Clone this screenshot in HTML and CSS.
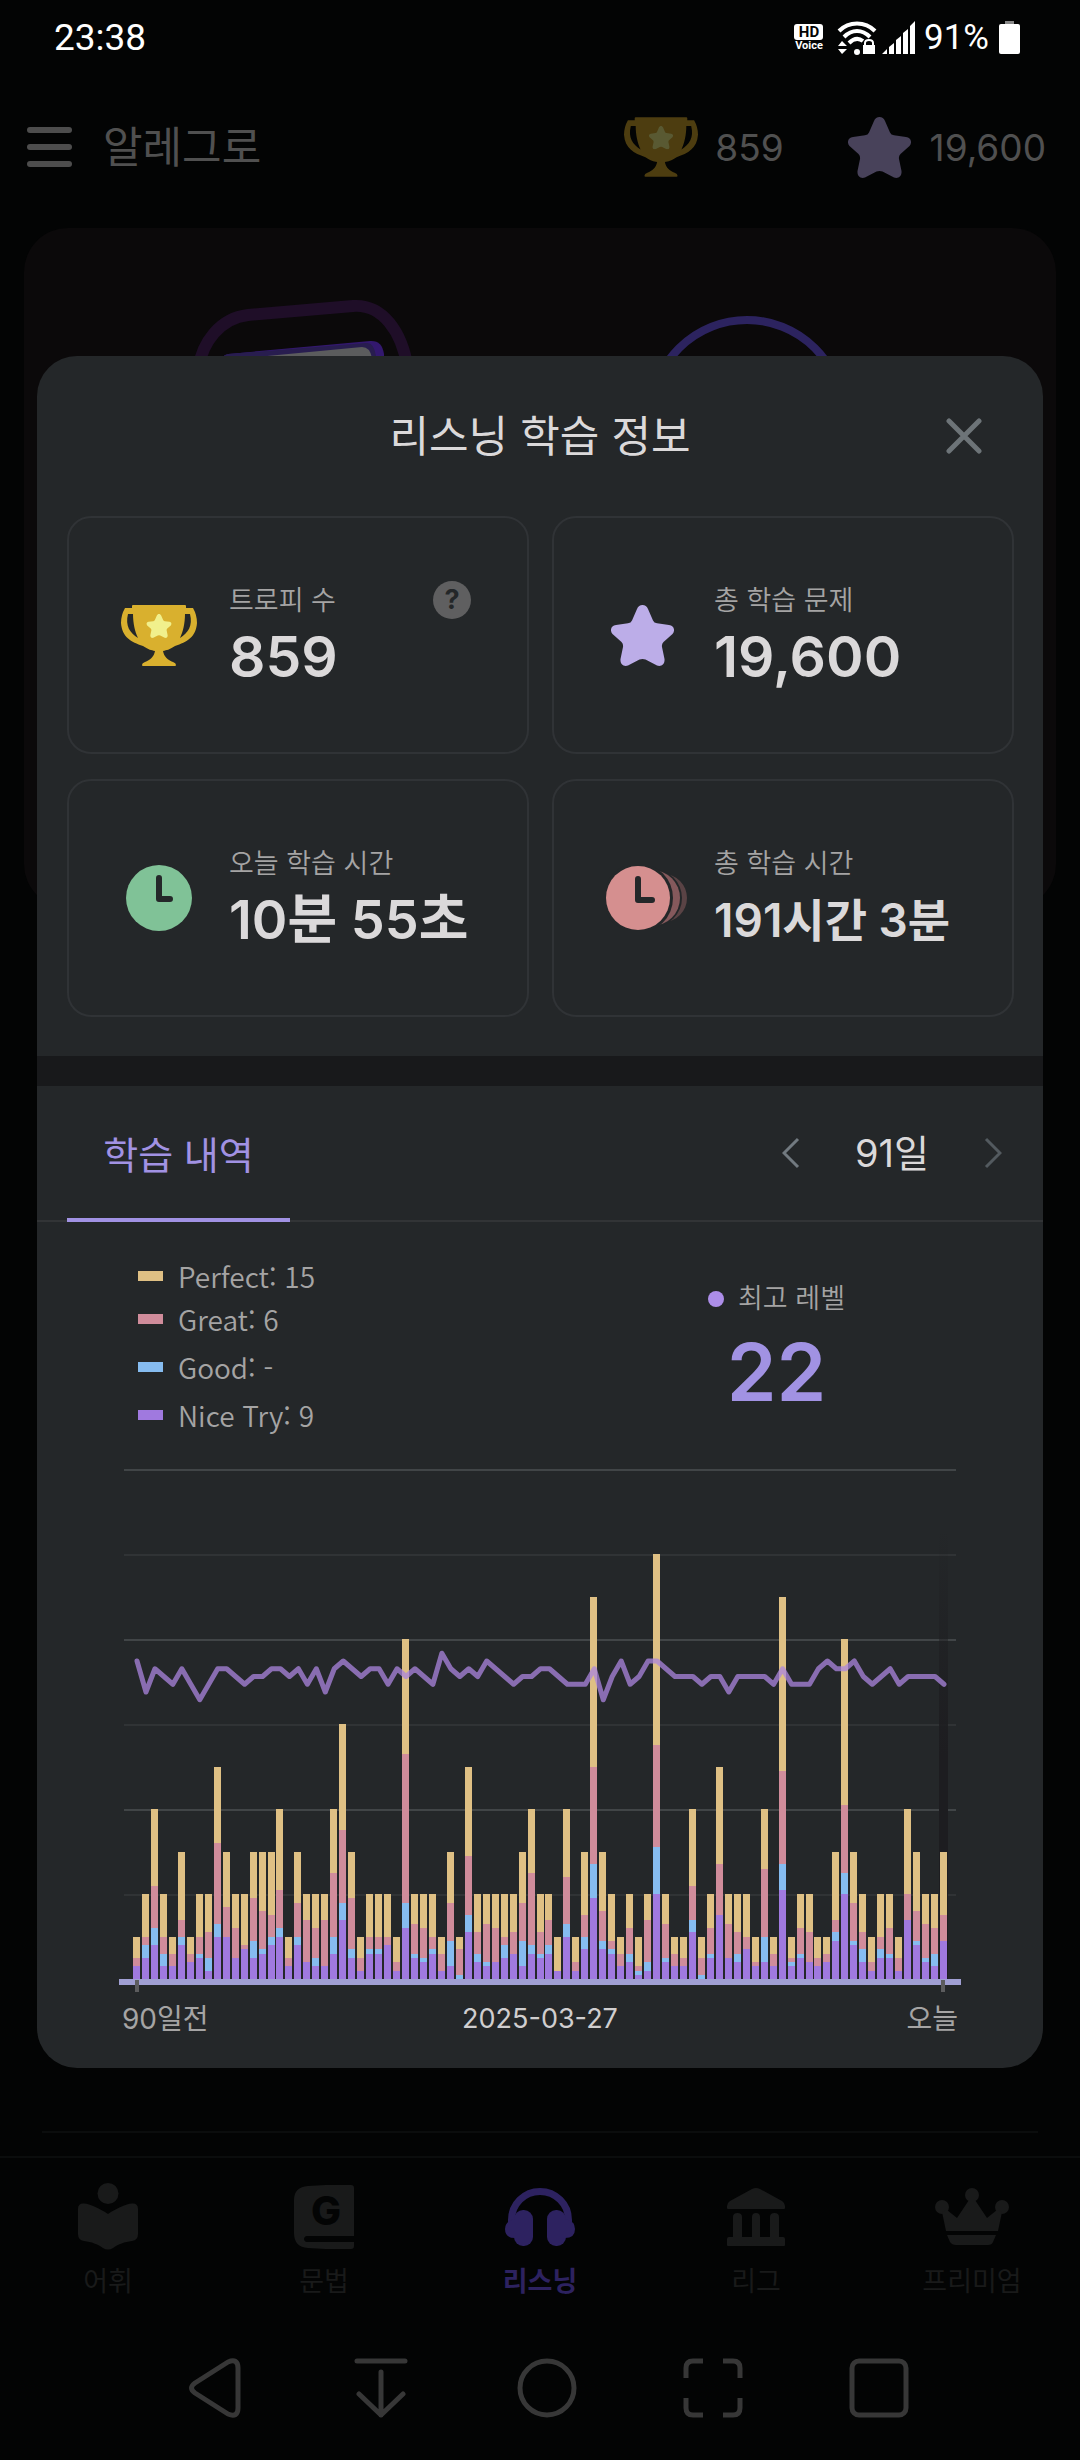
FILE: index.html
```html
<!DOCTYPE html>
<html lang="ko">
<head>
<meta charset="utf-8">
<meta name="viewport" content="width=device-width, initial-scale=1">
<title>리스닝 학습 정보</title>
<link rel="stylesheet" href="styles.css">
</head>
<body>
<svg class="sprite" aria-hidden="true">
  <symbol id="star" viewBox="0 0 63 61">
    <path d="M31.500 0C34 0 36 1.500 37 4L42 15.500Q43 18 46 18.300L58 20C63 20.500 64.500 25.500 61.500 29L52.500 37Q50.500 39 51 42L53.500 54C54 59 50.500 62 46 60.500L34.500 54.500Q31.500 53.300 28.500 54.500L17 60.500C12.500 62 9 59 9.500 54L12 42Q12.500 39 10.500 37L1.500 29C-1.500 25.500 0 20.500 5 20L17 18.300Q20 18 21 15.500L26 4C27 1.500 29 0 31.500 0Z"/>
  </symbol>
  <symbol id="trophy" viewBox="0 0 76 61">
    <path fill-rule="evenodd" d="M11 1Q11 0 12 0H64Q65 0 65 1V3H72Q76 10 76 18C75 32 66 37 54 41C48 45 46 45 42 46C43 52 47 55 52 57Q55 58 55 60Q55 61 54 61H22Q21 61 21 60Q21 58 24 57C29 55 33 52 34 46C30 45 28 45 22 41C10 37 1 32 0 18Q0 10 4 3H11ZM7 9H12C12 18 14 27 17 33C9 28 4 21 7 9ZM69 9H64C64 18 62 27 59 33C67 28 72 21 69 9Z"/>
    <svg class="trophy-star" x="25" y="9" width="26" height="24"><use href="#star"/></svg>
  </symbol>
</svg>

<div class="screen">
  <div class="status">
    <time>23:38</time>
    <div class="status-icons">
      <svg class="hd" viewBox="0 0 30 28" aria-label="HD Voice">
        <rect x="0" y="0" width="29" height="16" rx="3" fill="#fff"/>
        <text x="15" y="13" class="hd-top">HD</text>
        <text x="15" y="25" class="hd-bottom">Voice</text>
      </svg>
      <svg class="wifi" viewBox="0 0 40 34" aria-label="Wi-Fi">
        <g fill="none" stroke="#fff" stroke-width="4">
          <path d="M2 10C12 0 28 0 38 10"/><path d="M7 16C15 8 25 8 33 16"/><path d="M12 22C17 17 22 17 26 20"/>
        </g>
        <path fill="#fff" d="M1 25L5 20L10 25ZM1 28H10L5 33ZM26 24H38V33H26Z"/>
        <circle cx="20" cy="31" r="3" fill="#fff"/>
        <path d="M28 25V22Q28 19 32 19Q36 19 36 22V25" fill="none" stroke="#fff" stroke-width="2"/>
      </svg>
      <svg class="signal" viewBox="0 0 34 34" aria-label="신호"><path fill="#fff" d="M0 33L5 28V33ZM7 33V26L12 22V33ZM14 33V19L19 15V33ZM21 33V12L26 8V33ZM28 33V5L33 0V33Z"/></svg>
      <span>91%</span>
      <svg class="battery" viewBox="0 0 22 34" aria-label="배터리"><rect x="6" width="9" height="3" fill="#888"/><rect y="3" width="21" height="30" rx="2" fill="#fff"/></svg>
    </div>
  </div>

  <header class="top">
    <button class="menu" aria-label="메뉴"><span></span><span></span><span></span></button>
    <h1>알레그로</h1>
    <svg class="top-trophy"><use href="#trophy"/></svg>
    <span class="top-count">859</span>
    <svg class="top-star"><use href="#star"/></svg>
    <span class="top-count">19,600</span>
  </header>

  <div class="stage">
    <main class="behind">
      <div class="hero">
        <svg viewBox="0 0 1032 140" aria-hidden="true">
          <path d="M173 150C176 112 198 90 224 87L329 78C356 76 380 100 385 150" fill="none" stroke="#1f0e28" stroke-width="12"/>
          <path d="M196 134Q198 127 204 126L346 113Q358 112 360 126V140H196Z" fill="#33186e"/>
          <path d="M196 134Q198 127 204 126L342 115Q350 114 352 128V140H196Z" fill="#281d4f"/>
          <path d="M210 131L338 119Q346 119 348 130V140H210Z" fill="#5b5c5d"/>
          <circle cx="723" cy="188" r="96" fill="none" stroke="#2c235f" stroke-width="8"/>
        </svg>
      </div>
      <hr>
    </main>

    <section class="modal" role="dialog" aria-labelledby="modal-title">
      <div class="modal-head">
        <h2 id="modal-title">리스닝 학습 정보</h2>
        <button class="close" aria-label="닫기"><svg viewBox="0 0 36 36"><path d="M3 3L33 33M33 3L3 33"/></svg></button>
      </div>

      <div class="stats">
        <article class="stat">
          <div class="stat-icon"><svg class="icon-trophy"><use href="#trophy"/></svg></div>
          <div class="stat-text"><h3>트로피 수</h3><p>859</p></div>
          <button class="help" aria-label="도움말">?</button>
        </article>
        <article class="stat">
          <div class="stat-icon"><svg class="icon-star"><use href="#star"/></svg></div>
          <div class="stat-text"><h3>총 학습 문제</h3><p>19,600</p></div>
        </article>
        <article class="stat">
          <div class="stat-icon">
            <svg class="icon-clock" viewBox="0 0 66 66"><circle cx="33" cy="33" r="33" fill="#80c297"/><path d="M33 13V34H44"/></svg>
          </div>
          <div class="stat-text"><h3>오늘 학습 시간</h3><p class="fit-medium">10분 55초</p></div>
        </article>
        <article class="stat">
          <div class="stat-icon">
            <svg class="icon-clocks" viewBox="0 0 82 64">
              <circle cx="57" cy="32" r="24" fill="#5a4345"/><circle cx="47" cy="32" r="29" fill="#242729"/>
              <circle cx="46" cy="32" r="28" fill="#85595c"/><circle cx="32" cy="32" r="35" fill="#242729"/>
              <circle cx="32" cy="32" r="32" fill="#d58f8f"/><path d="M32 13V34H46"/>
            </svg>
          </div>
          <div class="stat-text"><h3>총 학습 시간</h3><p class="fit-small">191시간 3분</p></div>
        </article>
      </div>

      <div class="tabs">
        <button class="tab">학습 내역</button>
        <div class="pager">
          <button aria-label="이전"><svg viewBox="0 0 18 32"><path d="M16 2L2 16L16 30"/></svg></button>
          <span>91일</span>
          <button class="next" aria-label="다음"><svg viewBox="0 0 18 32"><path d="M2 2L16 16L2 30"/></svg></button>
        </div>
      </div>

      <div class="history">
        <div class="summary">
          <ul class="legend">
            <li class="perfect">Perfect: 15</li>
            <li class="great">Great: 6</li>
            <li class="good">Good: -</li>
            <li class="nice">Nice Try: 9</li>
          </ul>
          <div class="level">
            <h3>최고 레벨</h3>
            <p>22</p>
          </div>
        </div>
        <svg id="chart" class="chart" viewBox="0 0 842 532" role="img" aria-label="최근 91일 학습 내역"></svg>
        <div class="axis"><span>90일전</span><time>2025-03-27</time><span>오늘</span></div>
      </div>
    </section>
  </div>

  <nav class="bottom">
    <a href="#vocabulary">
      <svg width="60" height="67" viewBox="0 0 60 67"><circle cx="30" cy="10.500" r="10.500"/><path d="M30 31C21 25 12 21 6 20.500Q0 20 0 26V51Q0 57 6 58C14 59 19 61 25 65Q30 68 35 65C41 61 46 59 54 58Q60 57 60 51V26Q60 20 54 20.500C48 21 39 25 30 31Z"/></svg>
      <span>어휘</span>
    </a>
    <a href="#grammar">
      <svg width="60" height="64" viewBox="0 0 60 64"><path d="M14 1L32 0H57Q60 0 60 3V51H13C9 51 9 57 13 57H60V61Q60 64 57 64H32L14 63Q0 62 0 48V15Q0 2 14 1Z"/><text x="32" y="40" class="book-letter">G</text></svg>
      <span>문법</span>
    </a>
    <a href="#listening" class="active" aria-current="page">
      <svg width="70" height="58" viewBox="0 0 70 58"><path d="M6.500 36V32A28.500 28.500 0 0 1 63.500 32V36" fill="none" stroke="currentColor" stroke-width="7"/><rect x="9" y="22" width="19" height="36" rx="9"/><rect x="42" y="22" width="19" height="36" rx="9"/><path d="M10 31Q0 33 0 41Q0 50 10 50ZM60 31Q70 33 70 41Q70 50 60 50Z"/></svg>
      <span>리스닝</span>
    </a>
    <a href="#league">
      <svg width="58" height="58" viewBox="0 0 58 58"><path d="M25 1Q29 -1 33 1L55 13Q58 15 58 18V20Q58 21 57 21H1Q0 21 0 20V18Q0 15 3 13ZM0 51Q0 49 2 49H6V29Q6 25 10.500 25Q15 25 15 29V49H25V29Q25 25 29 25Q33 25 33 29V49H43V29Q43 25 47.500 25Q52 25 52 29V49H56Q58 49 58 51V57Q58 58 57 58H1Q0 58 0 57Z"/></svg>
      <span>리그</span>
    </a>
    <a href="#premium">
      <svg width="74" height="57" viewBox="0 0 74 57"><circle cx="7" cy="19" r="7"/><circle cx="37" cy="7" r="7"/><circle cx="67" cy="19" r="7"/><path d="M7 24L12 22L22 30L34 12H40L52 30L62 22L67 24L63 43H11ZM12 47H61L58 54Q57 57 53 57H21Q17 57 15 54Z"/></svg>
      <span>프리미엄</span>
    </a>
  </nav>

  <div class="system">
    <button aria-label="뒤로"><svg viewBox="0 0 60 60"><path d="M43 4L10 25Q3 30 10 35L43 56Q53 60 53 50V10Q53 0 43 4Z"/></svg></button>
    <button aria-label="내리기"><svg viewBox="0 0 60 60"><path d="M6 3H54M30 14V57M8 36L30 57L52 36"/></svg></button>
    <button aria-label="홈"><svg viewBox="0 0 60 60"><circle cx="30" cy="30" r="27"/></svg></button>
    <button aria-label="화면 캡처"><svg viewBox="0 0 60 60"><path class="butt" d="M20 3H10Q3 3 3 10V20M40 3H50Q57 3 57 10V20M3 40V50Q3 57 10 57H20M40 57H50Q57 57 57 50V40"/></svg></button>
    <button aria-label="최근 앱"><svg viewBox="0 0 60 60"><rect x="3" y="3" width="54" height="54" rx="7"/></svg></button>
  </div>
</div>
<script src="chart.js"></script>
</body>
</html>
```

FILE: styles.css
```css
* { box-sizing: border-box; margin: 0; padding: 0; }
body {
  background: #030404;
  color: #505050;
  font-family: Inter, "Noto Sans CJK KR", sans-serif;
}
button { border: 0; background: none; color: inherit; font: inherit; cursor: pointer; }
ul { list-style: none; }
svg { display: block; }
h1, h2, h3 { font-weight: 400; }
.sprite { width: 0; height: 0; position: absolute; }

.screen { display: flex; flex-direction: column; min-height: 100vh; }

.status {
  display: flex; align-items: center; justify-content: space-between;
  height: 75px; padding: 0 59px 0 54px;
  color: #fff; font-family: Roboto, sans-serif;
}
.status time { font-size: 37px; }
.status-icons { display: flex; align-items: center; font-size: 35px; }
.hd { width: 30px; height: 28px; margin-right: 13px; }
.hd-top, .hd-bottom { text-anchor: middle; font-family: Roboto, sans-serif; font-weight: 700; }
.hd-top { font-size: 15px; fill: #030404; }
.hd-bottom { font-size: 11px; fill: #fff; }
.wifi { width: 40px; height: 34px; margin-right: 5px; }
.signal { width: 34px; height: 34px; margin-right: 8px; }
.battery { width: 22px; height: 34px; margin-left: 10px; }

.top { display: flex; align-items: center; height: 144px; padding: 0 34px 0 27px; }
.menu { display: grid; gap: 11px; width: 45px; margin-right: 31px; }
.menu span { height: 6px; border-radius: 3px; background: #4d4d4d; }
.top h1 { flex: 1; font-size: 43px; line-height: 60px; }
.top-trophy { width: 74px; height: 60px; fill: #4d3d10; margin-right: 17px; --trophy-star: #595932; }
.trophy-star { fill: var(--trophy-star); }
.top-star { width: 63px; height: 61px; fill: #48425a; margin: 0 19px 0 64px; }
.top-count { font-size: 37px; }

.stage { display: grid; grid-template-columns: minmax(0, 1fr); flex: 1; }
.behind, .modal { grid-area: 1 / 1; }
.behind { display: flex; flex-direction: column; justify-content: space-between; padding: 9px 24px 23px; }
.hero { height: 680px; border-radius: 44px; background: #0b090a; }
.behind hr { margin: 0 18px; border: 0; border-top: 2px solid #0b0d0d; }

.modal {
  align-self: start;
  margin: 137px 37px 88px;
  border-radius: 40px;
  background: #242729;
  color: #dbd9da;
}
.modal-head { display: grid; grid-template-columns: 1fr auto 1fr; align-items: center; height: 160px; padding: 0 49px; }
.modal-head h2 { grid-column: 2; font-size: 43px; line-height: 60px; }
.close { justify-self: end; padding: 12px; }
.close svg { width: 36px; height: 36px; stroke: #6d7478; stroke-width: 5; stroke-linecap: round; }

.stats { display: grid; grid-template-columns: repeat(2, minmax(0, 1fr)); gap: 25px 23px; padding: 0 29px 39px 30px; }
.stat {
  display: grid; grid-template-columns: 140px minmax(0, 1fr) auto; align-items: center; column-gap: 20px;
  height: 238px; padding-right: 56px;
  border: 2px solid #303336; border-radius: 24px;
}
.stat-icon { display: flex; justify-content: flex-end; }
.icon-trophy { width: 76px; height: 61px; margin-right: 12px; fill: #d9b02e; --trophy-star: #f1f08c; }
.icon-star { width: 63px; height: 61px; margin-right: 20px; fill: #bcade8; }
.icon-clock { width: 66px; height: 66px; margin-right: 17px; }
.icon-clocks { width: 82px; height: 64px; margin-right: 6px; }
.icon-clock path, .icon-clocks path { fill: none; stroke: #242729; stroke-width: 6; stroke-linecap: round; stroke-linejoin: round; }
.stat-text { white-space: nowrap; }
.stat h3, .level h3 { font-size: 27px; line-height: 38px; font-weight: 350; color: #a5a4a4; }
.stat p { margin-top: 6px; font-size: 57px; line-height: 62px; font-weight: 600; }
.stat .fit-medium { font-size: 54px; }
.stat .fit-small { font-size: 46px; }
.help {
  align-self: start; width: 38px; height: 38px; margin-top: 63px;
  border-radius: 50%; background: #5f5f60; color: #242729;
  font-size: 27px; line-height: 38px; font-weight: 700;
}

.tabs {
  display: flex; justify-content: space-between;
  height: 166px; padding: 0 29px 0 30px;
  border-top: 30px solid #18191b; border-bottom: 2px solid #323436;
}
.tab { width: 223px; margin-bottom: -2px; border-bottom: 4px solid #a192e3; color: #a192e3; font-size: 38px; }
.pager { display: flex; align-items: center; font-size: 38px; line-height: 48px; }
.pager button { padding: 12px; }
.pager span { width: 160px; text-align: center; }
.pager svg { width: 18px; height: 32px; fill: none; stroke: #727a80; stroke-width: 3; }
.pager .next svg { stroke: #535a5f; }

.history { padding: 35px 82px 30px; }
.summary { display: flex; justify-content: space-between; align-items: flex-start; padding: 0 116px 0 19px; }
.legend { font-family: "Noto Sans CJK KR", sans-serif; font-size: 28px; line-height: 38px; font-weight: 350; color: #a5a4a4; }
.legend li { display: flex; align-items: center; gap: 15px; height: 48px; }
.legend .perfect { height: 38px; }
.legend li::before { content: ""; width: 25px; height: 10px; background: var(--key); }
.perfect { --key: #dfc084; }
.great { --key: #d08c9b; }
.good { --key: #86bcf0; }
.nice { --key: #a079df; }
.level { padding-top: 23px; text-align: center; }
.level h3 { display: flex; align-items: center; gap: 14px; }
.level h3::before { content: ""; width: 16px; height: 16px; border-radius: 50%; background: #ad8ee9; }
.level p { margin-top: 14px; color: #a192e3; font-size: 80px; line-height: 80px; font-weight: 600; }
.chart { width: 100%; height: auto; margin-top: 21px; }
.axis { display: grid; grid-template-columns: 1fr auto 1fr; padding: 8px 3px 0; font-size: 28px; line-height: 38px; color: #a5a4a4; }
.axis span:last-child { text-align: right; }
.axis time { font-size: 27px; color: #d0cecf; }

.bottom { display: grid; grid-template-columns: repeat(5, 1fr); height: 159px; border-top: 2px solid #0b0d0d; }
.bottom a {
  display: grid; grid-template-rows: 67px 40px; row-gap: 12px; align-content: start; place-items: center;
  padding-top: 25px; color: #191a1a; text-decoration: none; font-size: 27px; line-height: 40px;
}
.bottom svg { fill: currentColor; }
.bottom .active { color: #2d2260; font-weight: 700; }
.book-letter { fill: #030404; font-size: 40px; font-weight: 800; text-anchor: middle; }

.system { display: grid; grid-template-columns: repeat(5, 1fr); place-items: center; height: 146px; padding: 0 118px 0 132px; }
.system svg { width: 60px; height: 60px; fill: none; stroke: #373737; stroke-width: 5; stroke-linecap: round; stroke-linejoin: round; }
.system .butt { stroke-linecap: butt; }
```

FILE: chart.js
```js
// One row per day, oldest first: [nice try, good, great, perfect].
const days = [
  [3,0,2,5],[5,3,2,10],[8,4,10,18],[3,3,4,10],[3,0,3,4],[8,2,4,16],[4,0,2,4],[5,1,4,10],[2,3,6,9],[10,3,19,18],
  [10,0,7,13],[5,0,7,8],[7,0,1,12],[5,4,10,11],[6,1,9,14],[8,2,5,15],[10,2,9,19],[3,0,2,5],[8,2,8,12],[4,0,10,6],
  [3,2,7,8],[3,0,11,6],[6,4,15,15],[14,4,17,25],[5,2,12,11],[2,0,3,5],[6,1,3,10],[6,1,3,10],[8,0,2,10],[2,0,2,6],
  [12,6,35,27],[5,1,7,7],[4,1,7,8],[6,1,3,10],[2,0,4,4],[3,6,9,12],[0,1,6,3],[11,4,14,21],[4,2,5,9],[3,1,9,7],
  [4,0,8,8],[5,3,2,10],[6,0,5,9],[3,6,9,12],[6,2,17,15],[5,1,5,9],[6,2,6,6],[2,0,0,8],[10,3,11,16],[2,0,2,6],
  [7,3,5,15],[19,8,23,40],[7,2,7,14],[6,1,2,11],[3,0,3,4],[4,2,6,8],[1,1,1,7],[2,2,10,6],[20,11,24,45],[4,1,8,7],
  [3,0,3,4],[3,0,2,5],[11,3,8,18],[0,1,4,5],[5,1,6,8],[15,0,12,23],[5,0,8,7],[4,2,5,9],[7,0,3,10],[3,0,1,6],
  [4,6,16,14],[3,0,3,4],[21,6,22,41],[3,1,1,5],[5,1,6,8],[4,0,7,9],[3,0,2,5],[4,0,2,4],[9,2,3,16],[20,5,16,39],
  [8,1,9,12],[4,3,4,9],[2,0,2,6],[5,2,3,10],[5,1,6,8],[2,0,3,5],[14,0,6,20],[8,1,7,14],[4,1,8,7],[3,3,6,8],[9,0,6,15]
];
const levels = [
  21,17,20,19,18,20,18,16,18,20,20,19,18,19,19,20,20,19,20,18,20,17,20,21,20,19,20,20,18,20,19,
  20,19,18,22,20,19,20,19,21,20,19,18,19,19,20,20,19,18,18,18,20,16,19,21,18,19,21,21,20,19,19,
  19,18,19,19,17,19,19,19,19,18,20,18,18,18,20,21,20,20,21,19,18,19,20,18,19,19,19,19,18
];
const colors = ["#a079df", "#86bcf0", "#d08c9b", "#dfc084"];
const base = 519, unit = 4.25, first = 14, last = 821;
const step = (last - first) / (days.length - 1);
const rect = (x, y, w, h, fill) => `<rect x="${x}" y="${y}" width="${w}" height="${h}" fill="${fill}"/>`;

let out = '<defs><linearGradient id="today" x1="0" y1="0" x2="0" y2="1">' +
  '<stop offset="0" stop-color="#1d1d20" stop-opacity="0"/><stop offset=".5" stop-color="#1d1d20"/></linearGradient></defs>' +
  '<g shape-rendering="crispEdges">';
for (let k = 1; k <= 6; k++) {
  out += rect(5, Math.round(base - k * 20 * unit), 832, 2, k % 2 ? "#303335" : "#414547");
}
out += rect(last - 1, 70, 9, base - 70, "url(#today)");
days.forEach((day, i) => {
  const x = Math.round(first + i * step);
  let sum = 0, y = base;
  day.forEach((count, part) => {
    sum += count;
    const top = Math.round(base - sum * unit);
    if (count) out += rect(x, top, 7, y - top, colors[part]);
    y = top;
  });
});
out += rect(0, base, 842, 6, "#a09fd3");
out += rect(first + 2, base + 1, 4, 12, "#5c5c5e") + rect(last + 1, base + 1, 4, 12, "#5c5c5e") + "</g>";
const points = levels.map((level, i) => `${first + 4 + i * step},${201 + (21 - level) * 7.75}`).join(" ");
out += `<polyline points="${points}" fill="none" stroke="#ab85df" stroke-opacity=".75" stroke-width="5" stroke-linejoin="round" stroke-linecap="round"/>`;
document.getElementById("chart").innerHTML = out;
```
